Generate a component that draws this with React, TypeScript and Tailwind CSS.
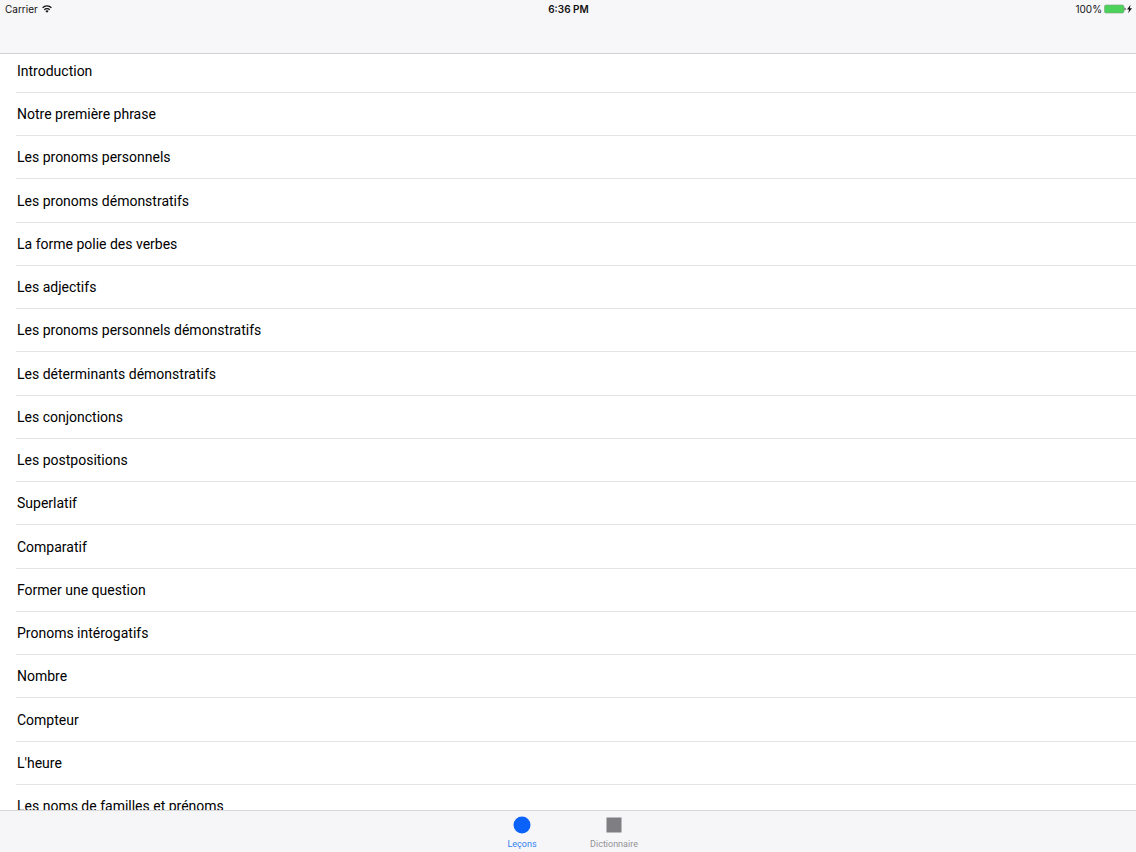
import React, { useState } from 'react';
import clsx from 'clsx';

type Tab = 'lessons' | 'dictionary';

const LESSONS = [
  'Introduction',
  'Notre première phrase',
  'Les pronoms personnels',
  'Les pronoms démonstratifs',
  'La forme polie des verbes',
  'Les adjectifs',
  'Les pronoms personnels démonstratifs',
  'Les déterminants démonstratifs',
  'Les conjonctions',
  'Les postpositions',
  'Superlatif',
  'Comparatif',
  'Former une question',
  'Pronoms intérogatifs',
  'Nombre',
  'Compteur',
  "L'heure",
  'Les noms de familles et prénoms',
];

function WifiIcon() {
  return (
    <svg viewBox="0 0 20 16" className="w-[10px] h-2" aria-hidden="true">
      <g fill="none" stroke="#111" strokeWidth="2.6">
        <path d="M1.2 5.6a12.4 12.4 0 0 1 17.6 0" />
        <path d="M4.6 9.4a7.6 7.6 0 0 1 10.8 0" />
      </g>
      <path d="M10 15.6 6.8 12.2a4.5 4.5 0 0 1 6.4 0z" fill="#111" />
    </svg>
  );
}

function BatteryIcon() {
  return (
    <svg viewBox="0 0 28 10" className="w-7 h-[10px]" aria-hidden="true">
      <rect x="0.4" y="0.9" width="19.6" height="8.2" rx="1.6" fill="#4cd15b" stroke="#7f9a83" strokeWidth="0.5" />
      <path d="M20.6 3.4c1.3.3 1.3 2.9 0 3.2z" fill="#111" />
      <path d="M26.6 0.8 23 5.5h2.1L24.2 9.2l3.8-4.9h-2.2z" fill="#111" />
    </svg>
  );
}

function StatusBar() {
  return (
    <div className="grid grid-cols-3 items-center h-[17px] pl-[5px] pr-1 font-['Inter',sans-serif] text-[10px] leading-4 text-[#111]">
      <div className="flex items-center gap-1">
        <span>Carrier</span>
        <WifiIcon />
      </div>
      <span className="text-center font-semibold">6:36 PM</span>
      <div className="flex items-center justify-end gap-[2px]">
        <span>100%</span>
        <BatteryIcon />
      </div>
    </div>
  );
}

export default function App() {
  const [tab, setTab] = useState<Tab>('lessons');

  const tabClass = (name: Tab) =>
    clsx('flex flex-col items-center w-[92px] pt-[5px] text-[9px] leading-[10px]', tab === name ? 'text-[#2f80f0]' : 'text-[#929296]');

  return (
    <div className="flex flex-col h-screen bg-white font-['Roboto',sans-serif] text-black">
      <header className="h-[54px] shrink-0 bg-[#f7f6f9] border-b border-[#d2d2d5]">
        <StatusBar />
      </header>

      <main className="flex-1 min-h-0 overflow-hidden">
        {/* list is scrolled slightly under the header */}
        <ul className="-mt-1">
          {LESSONS.map(lesson => (
            <li key={lesson} className="h-[43px] nth-[4n]:h-11 pl-4">
              <a href="#" className="flex items-center h-full pl-px border-b border-[#e4e4e6] text-[14px] leading-5">
                {lesson}
              </a>
            </li>
          ))}
        </ul>
      </main>

      <nav className="flex justify-center h-[42px] shrink-0 bg-[#f6f6f8] border-t border-[#d8d8da]">
        <button type="button" onClick={() => setTab('lessons')} className={tabClass('lessons')}>
          <svg viewBox="0 0 18 18" className="w-[18px] h-[18px] mb-[5px]" aria-hidden="true">
            <circle cx="9" cy="9" r="8.5" fill={tab === 'lessons' ? '#0b62fb' : '#7f7e82'} />
          </svg>
          Leçons
        </button>
        <button type="button" onClick={() => setTab('dictionary')} className={tabClass('dictionary')}>
          <svg viewBox="0 0 18 18" className="w-[18px] h-[18px] mb-[5px]" aria-hidden="true">
            <rect x="1.5" y="1.5" width="15" height="15" fill={tab === 'dictionary' ? '#0b62fb' : '#7f7e82'} />
          </svg>
          Dictionnaire
        </button>
      </nav>
    </div>
  );
}
